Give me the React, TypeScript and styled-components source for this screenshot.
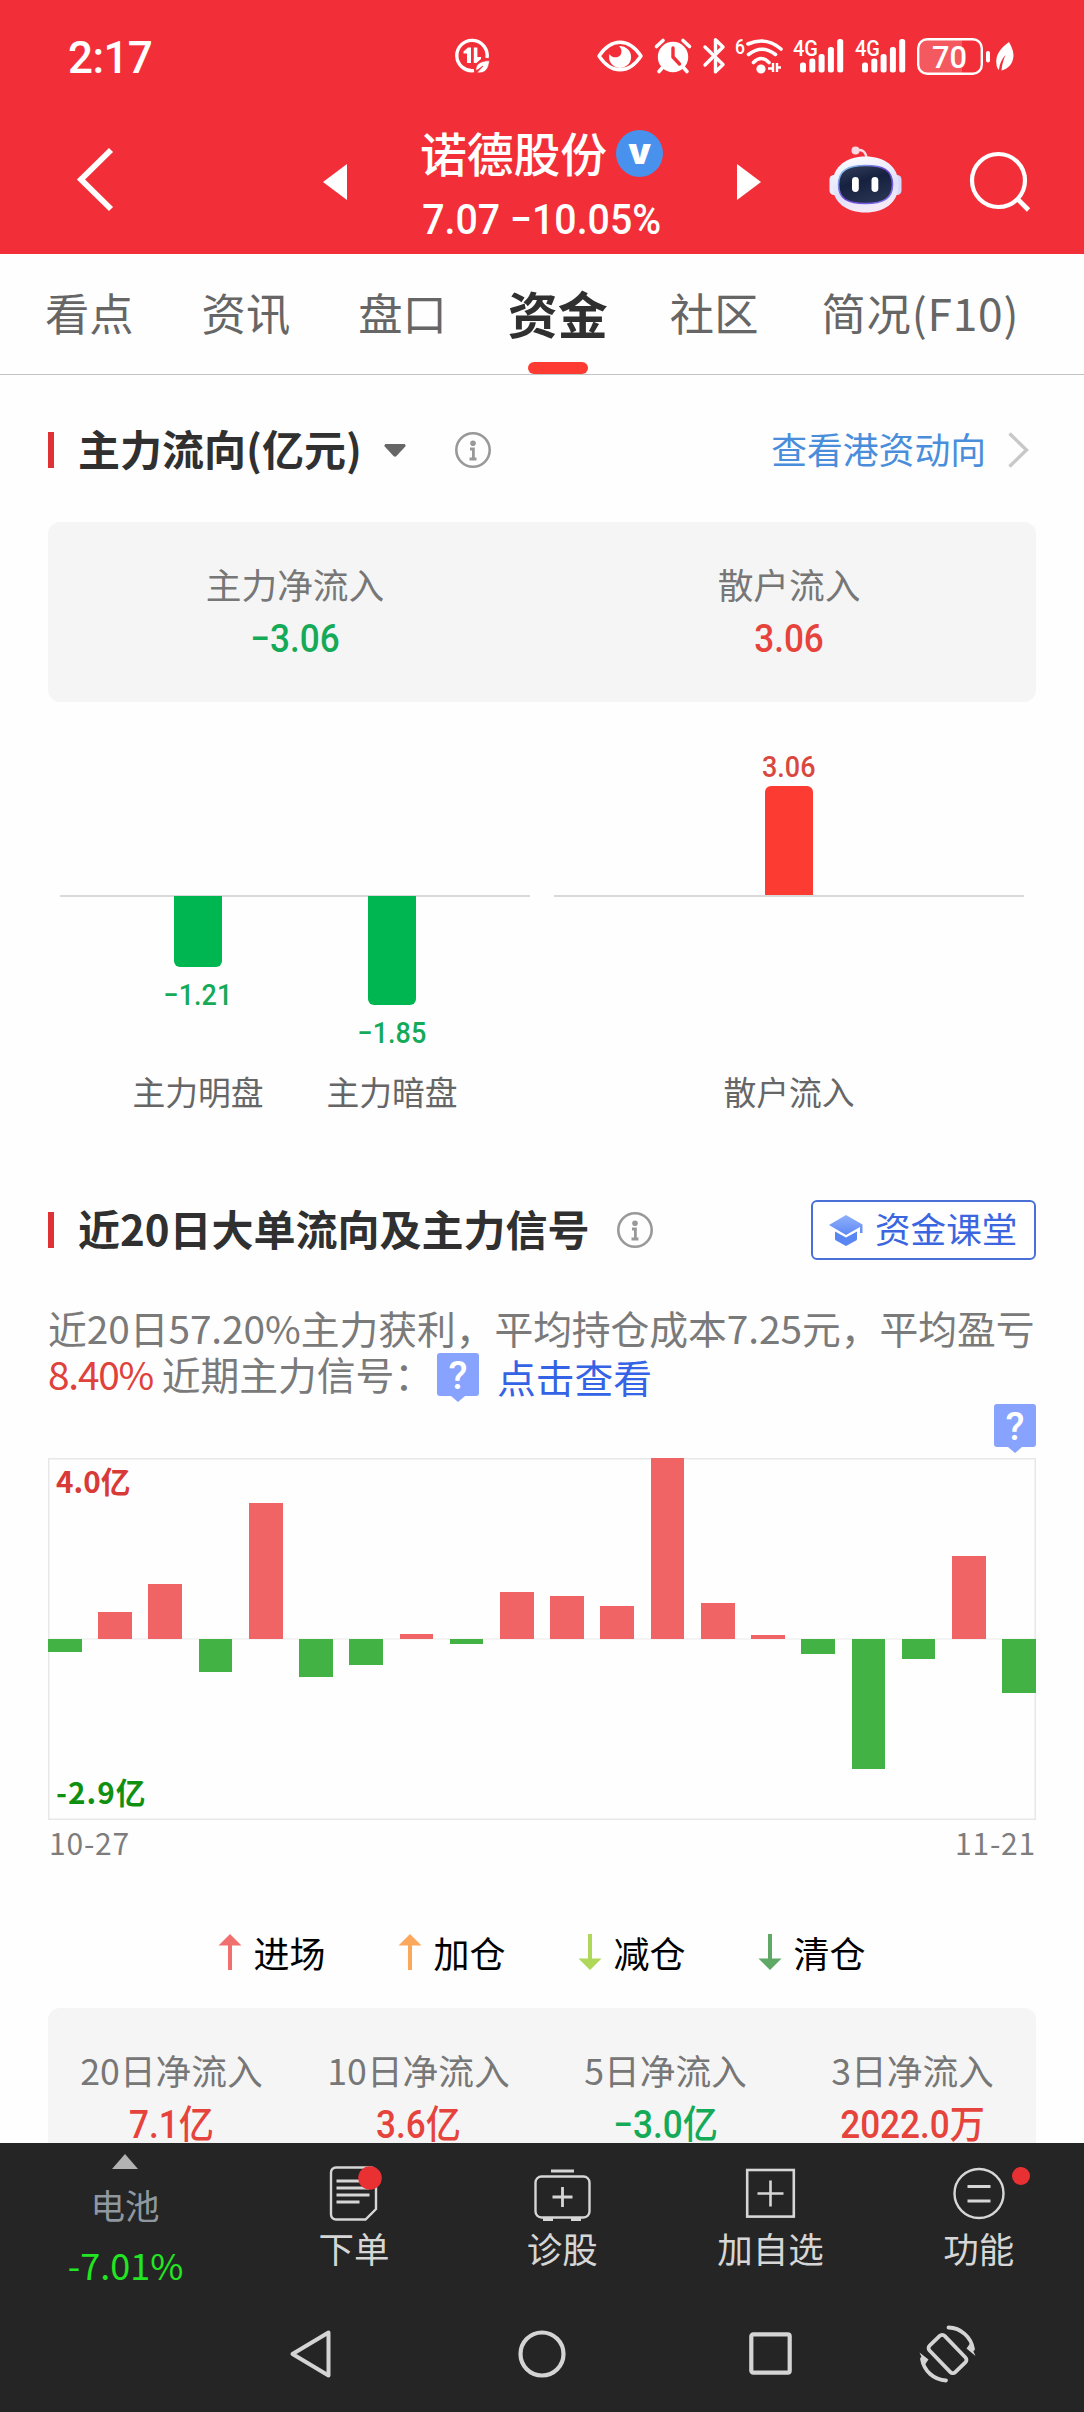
import React from "react";
import styled, { createGlobalStyle, css } from "styled-components";

const CJK = `"Noto Sans CJK SC", "Noto Sans", sans-serif`;
const NUM = `Roboto, "Noto Sans CJK SC", sans-serif`;

const RED = "#e5433b";
const GREEN = "#14aa58";

const GlobalStyle = createGlobalStyle`
  * { box-sizing: border-box; }
  body { margin: 0; background: #fefefe; font-family: ${CJK}; }
  svg { display: block; flex: none; overflow: visible; }
`;

const Screen = styled.div`
  width: 1084px;
  height: 2412px;
  display: flex;
  flex-direction: column;
  overflow: hidden;
  background: #fefefe;
  white-space: nowrap;
`;

/* ---------- header ---------- */

const Header = styled.header`
  height: 254px;
  flex: none;
  background: #f22f38;
  color: #fff;
`;

const StatusBar = styled.div`
  height: 112px;
  display: flex;
  align-items: center;
  padding-left: 68px;
`;

const Clock = styled.div`
  width: 387px;
  font: 500 44px/50px ${NUM};
  letter-spacing: -0.6px;
  padding-top: 3px;
`;

const StatusIcons = styled.div`
  display: flex;
  align-items: center;
  margin-left: 108px;
`;

const TitleBar = styled.div`
  height: 142px;
  display: flex;
  align-items: flex-start;
  padding-left: 77px;
`;

const IconSlot = styled.div<{ $top: number; $left: number }>`
  margin-top: ${(p) => p.$top}px;
  margin-left: ${(p) => p.$left}px;
`;

const TitleBlock = styled.div`
  width: 390px;
  padding-top: 15px;
  display: flex;
  flex-direction: column;
  align-items: center;
`;

const StockName = styled.div`
  display: flex;
  align-items: center;
  height: 50px;
  gap: 9px;
  margin-left: -1px;
  font: 500 46.8px/48px ${CJK};
`;

const VerifiedBadge = styled.span`
  width: 47px;
  height: 47px;
  margin-top: 3px;
  border-radius: 50%;
  background: #4892ee;
  display: flex;
  align-items: center;
  justify-content: center;
  font: 900 36px/40px Inter, sans-serif;
  padding-bottom: 5px;
`;

const Condensed = styled.span<{ $scale?: number }>`
  display: block;
  transform: scaleX(${(p) => p.$scale ?? 0.9});
`;

const Price = styled.div`
  margin-top: 23px;
  font: 500 42px/40px ${NUM};
`;

/* ---------- tabs ---------- */

const Tabs = styled.nav`
  height: 121px;
  flex: none;
  display: flex;
  padding-left: 45px;
  border-bottom: 1px solid #c4c4c4;
`;

const Tab = styled.div<{ $gap: number; $active?: boolean; $track?: number }>`
  height: 120px;
  margin-right: ${(p) => p.$gap}px;
  padding-top: 31px;
  display: flex;
  flex-direction: column;
  align-items: center;
  justify-content: space-between;
  font: 400 44.3px/54px ${CJK};
  letter-spacing: ${(p) => p.$track ?? 0}px;
  color: #666;
  ${(p) =>
    p.$active &&
    css`
      font-weight: 700;
      font-size: 50px;
      color: #303030;
      &::after {
        content: "";
        width: 60px;
        height: 12px;
        border-radius: 6px;
        background: #fd3b32;
      }
    `}
`;

/* ---------- body ---------- */

const Body = styled.main`
  height: 1768px;
  flex: none;
  padding: 45px 48px 0;
  overflow: hidden;
`;

const SectionHead = styled.div<{ $top?: number }>`
  height: 60px;
  margin-top: ${(p) => p.$top ?? 0}px;
  display: flex;
  align-items: center;
`;

const Marker = styled.i`
  width: 6px;
  height: 36px;
  background: #df3234;
  margin-right: 24px;
`;

const SectionTitle = styled.h2`
  margin: -4px 0 0;
  font: 700 42px/50px ${CJK};
  color: #303030;
`;

const Spacer = styled.div<{ $w?: number }>`
  ${(p) => (p.$w ? `width: ${p.$w}px;` : "flex: 1;")}
`;

const HeadLink = styled.a`
  margin: -4px 22px 0 0;
  font: 400 35.8px/42px ${CJK};
  color: #4a8edb;
`;

const ClassButton = styled.button`
  width: 225px;
  height: 60px;
  padding: 0 0 0 16px;
  display: flex;
  align-items: center;
  gap: 12px;
  border: 2px solid #4a6fd6;
  border-radius: 6px;
  background: #fff;
  color: #3b66e0;
  font: 400 35.6px/42px ${CJK};
  span { margin-top: -4px; }
`;

const Panel = styled.div<{ $cols: number; $top: number }>`
  height: 180px;
  margin-top: ${(p) => p.$top}px;
  padding-top: 42px;
  border-radius: 12px;
  background: #f5f5f5;
  display: grid;
  grid-template-columns: repeat(${(p) => p.$cols}, 1fr);
  text-align: center;
`;

const PanelLabel = styled.div`
  font: 400 35.7px/40px ${CJK};
  color: #777;
`;

const PanelValue = styled.div<{ $color: string }>`
  margin-top: 15px;
  font: 500 39px/40px ${NUM};
  color: ${(p) => p.$color};
`;

/* flow chart with one axis per half */

const FlowChart = styled.div`
  height: 407px;
  padding: 0 12px;
  display: grid;
  grid-template-columns: 1fr 1fr;
  gap: 24px;
`;

const FlowHalf = styled.div`
  display: grid;
  grid-template-rows: 193px 178px 36px;
  grid-auto-flow: column;
  justify-content: center;
  background: linear-gradient(#d9d9d9, #d9d9d9) 0 193px / 100% 2px no-repeat;
`;

const FlowCell = styled.div<{ $up?: boolean }>`
  width: 194px;
  display: flex;
  flex-direction: column;
  align-items: center;
  justify-content: ${(p) => (p.$up ? "flex-end" : "flex-start")};
  padding-top: ${(p) => (p.$up ? 0 : 1)}px;
`;

const FlowBar = styled.div<{ $up?: boolean; $h: number }>`
  width: 48px;
  height: ${(p) => p.$h}px;
  background: ${(p) => (p.$up ? "#fc3c32" : "#00b650")};
  border-radius: ${(p) => (p.$up ? "6px 6px 0 0" : "0 0 6px 6px")};
`;

const FlowValue = styled.div<{ $up?: boolean }>`
  margin: ${(p) => (p.$up ? "0 0 4px" : "13px 0 0")};
  font: 500 29px/30px ${NUM};
  color: ${(p) => (p.$up ? "#d9483f" : GREEN)};
`;

const FlowName = styled.div`
  text-align: center;
  font: 400 32.8px/36px ${CJK};
  color: #666;
`;

/* summary */

const Summary = styled.div`
  margin-top: 44px;
  font: 400 38.8px/46px ${CJK};
  letter-spacing: -0.06px;
  color: #7a7a7a;
`;

const SummaryLine = styled.div`
  height: 46px;
  display: flex;
`;

const SummaryLead = styled.div`
  width: 389px;
`;

const Loss = styled.span`
  color: #df413b;
  letter-spacing: -1.2px;
`;

const SignalLink = styled.a`
  margin: 3px 0 0 18px;
  color: #3563e6;
`;

const HintBox = styled.div`
  position: relative;
  width: 42px;
  height: 43px;
  margin-top: 3px;
  border-radius: 3px;
  background: #87a3fd;
  color: #fff;
  text-align: center;
  font: 500 39px/47px ${NUM};
  &::after {
    content: "";
    position: absolute;
    left: 14px;
    top: 43px;
    border: solid transparent;
    border-width: 6px 7px 0;
    border-top-color: #87a3fd;
  }
`;

const HintRow = styled.div`
  height: 62px;
  padding-top: 5px;
  display: flex;
  justify-content: flex-end;
`;

const History = styled.div`
  position: relative;
  height: 362px;
  display: flex;
  justify-content: space-between;
  box-shadow: inset 0 0 0 1.5px #e8e8e8;
  background: linear-gradient(#f4f4f4, #f4f4f4) 0 180px / 100% 2px no-repeat;
`;

const HistoryBar = styled.div<{ $v: number }>`
  width: 33.7px;
  height: ${(p) => Math.abs(p.$v)}px;
  margin-top: ${(p) => (p.$v > 0 ? 181 - p.$v : 181)}px;
  background: ${(p) => (p.$v > 0 ? "#f06466" : "#43b244")};
`;

const Extreme = styled.div<{ $low?: boolean }>`
  position: absolute;
  left: 8px;
  ${(p) => (p.$low ? "bottom: 11px; letter-spacing: 1px;" : "top: 6px;")}
  font: 700 29.7px/34px ${CJK};
  color: ${(p) => (p.$low ? "#109010" : "#d83a37")};
`;

const Dates = styled.div`
  margin-top: 7px;
  padding-left: 1px;
  display: flex;
  justify-content: space-between;
  font: 400 30px/30px ${CJK};
  letter-spacing: 0.8px;
  color: #7d7d7d;
`;

const Legend = styled.div`
  height: 40px;
  margin-top: 75px;
  display: flex;
  justify-content: center;
  gap: 71px;
`;

const LegendItem = styled.div`
  width: 109px;
  display: flex;
  align-items: center;
  gap: 12px;
  font: 400 36px/40px ${CJK};
  color: #000;
`;

/* ---------- bottom ---------- */

const Footer = styled.footer`
  flex: 1;
  background: #252525;
  color: #d6d6d6;
`;

const Actions = styled.div`
  height: 154px;
  display: grid;
  grid-template-columns: 250px repeat(4, 208.2px);
`;

const Ticker = styled.div`
  display: flex;
  flex-direction: column;
  align-items: center;
  padding-top: 11px;
`;

const TickerName = styled.div`
  margin-top: 15px;
  font: 400 34.5px/40px ${CJK};
  color: #8f989e;
`;

const TickerChange = styled.div`
  margin: 20px 0 0 1px;
  font: 400 36px/40px ${CJK};
  color: #22e622;
`;

const Action = styled.div`
  padding-top: 22px;
  display: flex;
  flex-direction: column;
  align-items: center;
  font: 400 35.5px/40px ${CJK};
  svg { margin-bottom: 7px; }
`;

const SystemNav = styled.div`
  height: 113px;
  display: flex;
  align-items: center;
  padding: 0 0 0 290px;
`;

/* ---------- icons ---------- */

const InfoIcon = () => (
  <svg width="36" height="36" viewBox="0 0 36 36" fill="none" stroke="#999" strokeWidth="2.6">
    <circle cx="18" cy="18" r="16.7" />
    <circle cx="18" cy="11.2" r="2.8" fill="#999" stroke="none" />
    <path d="M15 17h3.4v10M14.5 27h7" strokeWidth="2.8" />
  </svg>
);

const Signal = () => (
  <svg width="50" height="36" viewBox="0 0 50 36" fill="#fff">
    <text x="0" y="18" fontFamily="Roboto" fontWeight="500" fontSize="22" textLength="25" lengthAdjust="spacingAndGlyphs">4G</text>
    <rect x="7" y="24.5" width="6" height="10" rx="2.5" />
    <rect x="16.3" y="20.5" width="6" height="14" rx="2.5" />
    <rect x="25.6" y="16" width="6" height="18.5" rx="2.5" />
    <rect x="34.9" y="9" width="6" height="25.5" rx="2.5" />
    <rect x="44.2" y="1" width="6" height="33.5" rx="2.5" />
  </svg>
);

const DataSaverIcon = () => (
  <svg width="34" height="34" viewBox="0 0 34 34">
    <path d="M19 31.6A15.2 15.2 0 1 1 32 19" fill="none" stroke="#fff" strokeWidth="3.4" />
    <path d="M16 8.5V24h-4V14.5H8.5V12.5L13 8.5zM18.800 8.500h3.600V18h3.600v2l-4.600 4h-2.600z" fill="#fff" />
    <path d="M21 32c-1-6 3-10 13.500-10.500C34 29 31 35 21.800 33.800L28 27z" fill="#fff" stroke="#f22f38" strokeWidth="0.8" />
  </svg>
);

const EyeIcon = () => (
  <svg width="46" height="32" viewBox="0 0 46 32">
    <path d="M2 16C8 7 15 2.200 23 2.200S38 7 44 16C38 25 31 29.800 23 29.800S8 25 2 16z" fill="none" stroke="#fff" strokeWidth="3.4" strokeLinejoin="round" />
    <path d="M22 6a11 11 0 1 1-9.500 8c2 4 8.500 4.500 11 1 1.800-3 1-6.500-1.500-9z" fill="#fff" />
  </svg>
);

const AlarmIcon = () => (
  <svg width="36" height="34" viewBox="0 0 36 34">
    <circle cx="18" cy="18" r="15.2" fill="#fff" />
    <path d="M1.500 7.500L8 1.500M34.500 7.500L28 1.500M8 28l-4 4.500M28 28l4 4.500" stroke="#fff" strokeWidth="3.6" strokeLinecap="round" />
    <path d="M18 9v9l6.500 7" fill="none" stroke="#f22f38" strokeWidth="3.4" strokeLinecap="round" />
  </svg>
);

const BluetoothIcon = () => (
  <svg width="22" height="36" viewBox="0 0 22 36" fill="none" stroke="#fff" strokeWidth="3.4" strokeLinejoin="round" strokeLinecap="round">
    <path d="M2 9l18 17.500-7.500 7.200V22M2 27L20 9l-7.500-7.200V14" />
  </svg>
);

const WifiIcon = () => (
  <svg width="49" height="36" viewBox="0 0 49 36" fill="none" stroke="#fff" strokeWidth="3.6" strokeLinecap="round">
    <text x="0" y="16" fill="#fff" stroke="none" fontFamily="Roboto" fontWeight="500" fontSize="21" textLength="10" lengthAdjust="spacingAndGlyphs">6</text>
    <path d="M13 6Q31-2 46 11" />
    <path d="M13.500 16.500Q27 6 40.500 16.500" />
    <path d="M18.500 24.500Q26 16.500 34 24.500" />
    <circle cx="26" cy="31" r="4.6" fill="#fff" stroke="none" />
    <path d="M38 25v9M33 30.500h6M42 34V25M42 29.500h4" strokeWidth="2.4" strokeLinecap="butt" />
  </svg>
);

const BatteryIcon = () => (
  <svg width="98" height="37" viewBox="0 0 98 37" fill="none">
    <path d="M10 1.500H45V35.500H10a8.500 8.500 0 0 1-8.500-8.500V10A8.500 8.500 0 0 1 10 1.500z" fill="#f4595f" />
    <rect x="1.2" y="1.2" width="63.6" height="34.6" rx="9" stroke="#fff" strokeWidth="2.4" />
    <rect x="69" y="13" width="4" height="11.5" rx="2" fill="#fff" />
    <text x="32.5" y="29.5" textAnchor="middle" fill="#fff" fontFamily="Roboto" fontWeight="500" fontSize="31" textLength="35" lengthAdjust="spacingAndGlyphs">70</text>
    <path d="M92 4C84 10 78 16 79.500 27c.5 3 1.500 4 2.500 5 .8-7 3-11 6.500-15-2 5-3.500 9-4 15.500C91 31 96 26 96.500 18 96.500 12 94 8 92 4z" fill="#fff" />
  </svg>
);

const BackIcon = () => (
  <svg width="36" height="63" viewBox="0 0 36 63" fill="none" stroke="#fff" strokeWidth="5.8">
    <path d="M34 2L4 31.500 34 61" />
  </svg>
);

const Triangle = ({ right }: { right?: boolean }) => (
  <svg width="24" height="36" viewBox="0 0 24 36" fill="#fff">
    <path d={right ? "M0 0L24 18 0 36z" : "M24 0L0 18l24 18z"} />
  </svg>
);

const RobotIcon = () => (
  <svg width="73" height="67" viewBox="0 0 73 67">
    <defs>
      <linearGradient id="shell" x1="0" y1="0" x2="0.3" y2="1">
        <stop offset="0" stopColor="#ffffff" />
        <stop offset="0.7" stopColor="#dfe0fb" />
        <stop offset="1" stopColor="#f4e9f6" />
      </linearGradient>
      <linearGradient id="rim" x1="0" y1="0" x2="1" y2="1">
        <stop offset="0" stopColor="#8fe3f5" />
        <stop offset="0.5" stopColor="#6a3fd0" />
        <stop offset="1" stopColor="#7f7af0" />
      </linearGradient>
      <linearGradient id="visor" x1="0" y1="0" x2="0.4" y2="1">
        <stop offset="0" stopColor="#35405f" />
        <stop offset="0.5" stopColor="#16203f" />
        <stop offset="1" stopColor="#26304f" />
      </linearGradient>
    </defs>
    <path d="M27 4.500c6-1.500 10 1 10.500 8" fill="none" stroke="#fbdce8" strokeWidth="2.4" />
    <circle cx="26.500" cy="4.500" r="4" fill="#fbd9e4" />
    <rect x="0.500" y="29" width="10" height="20" rx="4.500" fill="#ecebfb" />
    <rect x="62.500" y="29" width="10" height="20" rx="4.500" fill="#d6d8fa" />
    <path d="M36.500 10.500C55 10.500 69.500 20 69.500 38.500S55 66.500 36.500 66.500 3.500 57 3.500 38.500 18 10.500 36.500 10.500z" fill="url(#shell)" />
    <path d="M36.500 19.500C54 19.500 63.500 24 63.500 38.500S54 57.500 36.500 57.500 9.500 53 9.500 38.500 19 19.500 36.500 19.500z" fill="url(#visor)" stroke="url(#rim)" strokeWidth="1.6" />
    <rect x="23" y="31" width="6.8" height="15" rx="3.4" fill="#fff" />
    <rect x="42.5" y="31" width="6.8" height="15" rx="3.4" fill="#fff" />
  </svg>
);

const SearchIcon = () => (
  <svg width="60" height="59" viewBox="0 0 60 59" fill="none" stroke="#fff" strokeWidth="4.2">
    <circle cx="28.5" cy="28.5" r="26.5" />
    <path d="M47.500 47L58.500 58" strokeWidth="4.6" />
  </svg>
);

const CapIcon = () => (
  <svg width="34" height="31" viewBox="0 0 34 31">
    <defs>
      <linearGradient id="cap" x1="0" y1="0" x2="0" y2="1">
        <stop offset="0" stopColor="#8fb0fb" />
        <stop offset="1" stopColor="#5f8af5" />
      </linearGradient>
    </defs>
    <path d="M17 0L33.500 9.500V18h-2.500v-6L17 20 0 10z" fill="url(#cap)" />
    <path d="M6 16.500l11 6 11-6V24q0 1-1 1.500L17 31 7 25.500Q6 25 6 24z" fill="#5a86f3" />
  </svg>
);

const Arrow = ({ color, down }: { color: string; down?: boolean }) => (
  <svg width="24" height="36" viewBox="0 0 24 36" fill={color}>
    <path d={down ? "M10 0h4v24.500h9.500L12 36 .5 24.500H10z" : "M12 0l11.500 11.500H14V36h-4V11.500H.5z"} />
  </svg>
);

const OrderIcon = () => (
  <svg width="50" height="56" viewBox="0 0 50 56" fill="none" stroke="#d6d6d6" strokeWidth="2.4">
    <path d="M7 2.500H42a5 5 0 0 1 5 5V44L36.500 54.500H7a5 5 0 0 1-5-5V7.500a5 5 0 0 1 5-5z" />
    <path d="M7.500 16H34M7.500 23H40M7.500 30H40.500M7.500 37H30.500" strokeWidth="2.8" />
    <circle cx="41" cy="13" r="11.8" fill="#e93134" stroke="none" />
  </svg>
);

const DiagnoseIcon = () => (
  <svg width="57" height="56" viewBox="0 0 57 56" fill="none" stroke="#d6d6d6" strokeWidth="2.4">
    <rect x="1.5" y="11.5" width="54" height="41" rx="6" />
    <path d="M17 6h23M28.500 22v20M18.500 32h20" strokeWidth="2.8" />
    <path d="M9 54.500H19M37 54.500H47" strokeWidth="3" />
  </svg>
);

const AddIcon = () => (
  <svg width="49" height="56" viewBox="0 0 49 56" fill="none" stroke="#d6d6d6" strokeWidth="2.6">
    <rect x="1.2" y="5" width="46.6" height="46.6" />
    <path d="M24.500 15.500v26M11.500 28.500h26" />
  </svg>
);

const MoreIcon = () => (
  <svg width="52" height="56" viewBox="0 0 52 56" fill="none" stroke="#d6d6d6" strokeWidth="2.4">
    <circle cx="26" cy="28.5" r="24.5" />
    <path d="M14.500 21.500h23M14.500 36h23" strokeWidth="2.8" />
    <circle cx="68" cy="11" r="9" fill="#e93134" stroke="none" />
  </svg>
);

const NavIcons = () => (
  <>
    <svg width="41" height="48" viewBox="0 0 41 48" fill="none" stroke="#d4d4d4" strokeWidth="4" strokeLinejoin="round">
      <path d="M38.500 2.500v43L2.500 24z" />
    </svg>
    <Spacer $w={187} />
    <svg width="48" height="48" viewBox="0 0 48 48" fill="none" stroke="#d4d4d4" strokeWidth="4.2">
      <circle cx="24" cy="24" r="21.5" />
    </svg>
    <Spacer $w={183} />
    <svg width="43" height="43" viewBox="0 0 43 43" fill="none" stroke="#d4d4d4" strokeWidth="4.2">
      <rect x="2.3" y="2.3" width="38.4" height="38.4" rx="2" />
    </svg>
    <Spacer $w={127} />
    <svg width="57" height="58" viewBox="0 0 57 58" fill="none" stroke="#d4d4d4" strokeWidth="3.8">
      <rect x="10" y="18.5" width="37" height="21" rx="3.5" transform="rotate(46 28.5 29)" />
      <path d="M29.500 2.500A25.500 25.500 0 0 1 54 24M27 55.500A25.500 25.500 0 0 1 3 34" strokeLinecap="round" />
      <path d="M56.500 31L47.500 23.500 51 18.500zM.5 27.500L9.500 34.500 6 39.500z" fill="#d4d4d4" stroke="none" />
    </svg>
  </>
);

/* ---------- data ---------- */

const tabs = [
  { name: "看点", gap: 68 },
  { name: "资讯", gap: 68 },
  { name: "盘口", gap: 61 },
  { name: "资金", gap: 62, active: true },
  { name: "社区", gap: 63 },
  { name: "简况(F10)", gap: 0, track: 0.8 },
];

const flows = [
  [
    { name: "主力明盘", value: "−1.21", h: 71 },
    { name: "主力暗盘", value: "−1.85", h: 109 },
  ],
  [{ name: "散户流入", value: "3.06", h: 109, up: true }],
];

const history = [-13, 27, 55, -33, 136, -37.5, -26, 5, -5, 47, 43, 33, 181, 36, 4.5, -15, -130, -20, 83.5, -54];

const legend = [
  { name: "进场", color: "#f07070" },
  { name: "加仓", color: "#fba85c" },
  { name: "减仓", color: "#afd85a", down: true },
  { name: "清仓", color: "#5fa865", down: true },
];

const totals = [
  { name: "20日净流入", value: "7.1亿", color: RED },
  { name: "10日净流入", value: "3.6亿", color: RED },
  { name: "5日净流入", value: "−3.0亿", color: GREEN },
  { name: "3日净流入", value: "2022.0万", color: RED },
];

const actions = [
  { name: "下单", icon: <OrderIcon /> },
  { name: "诊股", icon: <DiagnoseIcon /> },
  { name: "加自选", icon: <AddIcon /> },
  { name: "功能", icon: <MoreIcon /> },
];

type Flow = { name: string; value: string; h: number; up?: boolean };

const FlowColumn = ({ flow }: { flow: Flow }) => {
  const value = (
    <FlowValue $up={flow.up}>
      <Condensed $scale={0.93}>{flow.value}</Condensed>
    </FlowValue>
  );
  return (
    <>
      <FlowCell $up>
        {flow.up && value}
        {flow.up && <FlowBar $up $h={flow.h} />}
      </FlowCell>
      <FlowCell>
        {!flow.up && <FlowBar $h={flow.h} />}
        {!flow.up && value}
      </FlowCell>
      <FlowName>{flow.name}</FlowName>
    </>
  );
};

export default function App() {
  return (
    <Screen>
      <GlobalStyle />
      <Header>
        <StatusBar>
          <Clock>2:17</Clock>
          <DataSaverIcon />
          <StatusIcons>
            <EyeIcon />
            <Spacer $w={12} />
            <AlarmIcon />
            <Spacer $w={12} />
            <BluetoothIcon />
            <Spacer $w={10} />
            <WifiIcon />
            <Spacer $w={9} />
            <Signal />
            <Spacer $w={12} />
            <Signal />
            <Spacer $w={12} />
            <BatteryIcon />
          </StatusIcons>
        </StatusBar>
        <TitleBar>
          <IconSlot $top={36} $left={0}><BackIcon /></IconSlot>
          <IconSlot $top={52} $left={210}><Triangle /></IconSlot>
          <TitleBlock>
            <StockName>
              诺德股份<VerifiedBadge>v</VerifiedBadge>
            </StockName>
            <Price>
              <Condensed $scale={0.935}>7.07 −10.05%</Condensed>
            </Price>
          </TitleBlock>
          <IconSlot $top={52} $left={0}><Triangle right /></IconSlot>
          <IconSlot $top={34} $left={68}><RobotIcon /></IconSlot>
          <IconSlot $top={40} $left={68}><SearchIcon /></IconSlot>
        </TitleBar>
      </Header>

      <Tabs>
        {tabs.map((t) => (
          <Tab key={t.name} $gap={t.gap} $active={t.active} $track={t.track}>{t.name}</Tab>
        ))}
      </Tabs>

      <Body>
        <SectionHead>
          <Marker />
          <SectionTitle>主力流向(亿元)</SectionTitle>
          <Spacer $w={22} />
          <svg width="22" height="13" viewBox="0 0 22 13" fill="#666">
            <path d="M1.500 0h19q2 1 .8 2.500L12.500 12q-1.500 1.500-3 0L.7 2.500Q-.5 1 1.500 0z" />
          </svg>
          <Spacer $w={49} />
          <InfoIcon />
          <Spacer />
          <HeadLink>查看港资动向</HeadLink>
          <svg width="28" height="36" viewBox="0 0 28 36" fill="none" stroke="#c8c8c8" strokeWidth="3.4">
            <path d="M1.500 1.500L18.500 18l-17 16.500" />
          </svg>
        </SectionHead>

        <Panel $cols={2} $top={42}>
          <div>
            <PanelLabel>主力净流入</PanelLabel>
            <PanelValue $color={GREEN}><Condensed>−3.06</Condensed></PanelValue>
          </div>
          <div>
            <PanelLabel>散户流入</PanelLabel>
            <PanelValue $color={RED}><Condensed>3.06</Condensed></PanelValue>
          </div>
        </Panel>

        <FlowChart>
          {flows.map((half, i) => (
            <FlowHalf key={i}>
              {half.map((f) => <FlowColumn key={f.name} flow={f} />)}
            </FlowHalf>
          ))}
        </FlowChart>

        <SectionHead $top={91}>
          <Marker />
          <SectionTitle>近20日大单流向及主力信号</SectionTitle>
          <Spacer $w={27} />
          <InfoIcon />
          <Spacer />
          <ClassButton><CapIcon /><span>资金课堂</span></ClassButton>
        </SectionHead>

        <Summary>
          <SummaryLine>近20日57.20%主力获利，平均持仓成本7.25元，平均盈亏</SummaryLine>
          <SummaryLine>
            <SummaryLead><Loss>8.40%</Loss> 近期主力信号：</SummaryLead>
            <HintBox>?</HintBox>
            <SignalLink>点击查看</SignalLink>
          </SummaryLine>
        </Summary>
        <HintRow><HintBox>?</HintBox></HintRow>

        <History>
          {history.map((v, i) => <HistoryBar key={i} $v={v} />)}
          <Extreme>4.0亿</Extreme>
          <Extreme $low>-2.9亿</Extreme>
        </History>
        <Dates><span>10-27</span><span>11-21</span></Dates>

        <Legend>
          {legend.map((l) => (
            <LegendItem key={l.name}><Arrow color={l.color} down={l.down} />{l.name}</LegendItem>
          ))}
        </Legend>

        <Panel $cols={4} $top={36}>
          {totals.map((t) => (
            <div key={t.name}>
              <PanelLabel>{t.name}</PanelLabel>
              <PanelValue $color={t.color}><Condensed>{t.value}</Condensed></PanelValue>
            </div>
          ))}
        </Panel>
      </Body>

      <Footer>
        <Actions>
          <Ticker>
            <svg width="26" height="15" viewBox="0 0 26 15" fill="#b2b2b2"><path d="M13 0l13 15H0z" /></svg>
            <TickerName>电池</TickerName>
            <TickerChange>-7.01%</TickerChange>
          </Ticker>
          {actions.map((a) => (
            <Action key={a.name}>{a.icon}{a.name}</Action>
          ))}
        </Actions>
        <SystemNav><NavIcons /></SystemNav>
      </Footer>
    </Screen>
  );
}
